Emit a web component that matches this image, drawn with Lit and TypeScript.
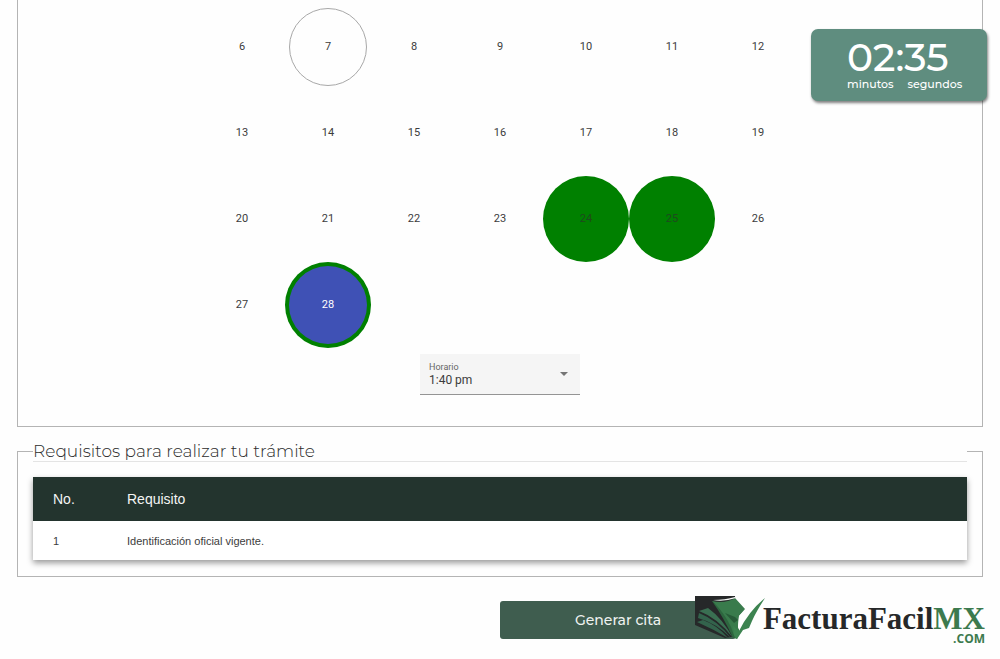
import { LitElement, html, css } from "lit";
import { customElement, state } from "lit/decorators.js";
import { classMap } from "lit/directives/class-map.js";

@customElement("brand-logo")
class BrandLogo extends LitElement {
  static styles = css`
    :host {
      display: flex;
      align-items: flex-start;
    }
    .mark {
      display: block;
      width: 72px;
      height: 46px;
      flex: none;
      margin-right: -4px;
    }
    .words {
      display: flex;
      flex-direction: column;
      align-items: flex-end;
      padding-top: 8px;
    }
    .name {
      font: bold 31px/30px "Liberation Serif", serif;
      color: #262829;
      white-space: nowrap;
    }
    .mx {
      color: #3c7a4e;
    }
    .com {
      font: bold 12px/10px "Open Sans", sans-serif;
      color: #3c7a4e;
    }
  `;
  render() {
    return html`
      <svg class="mark" viewBox="0 0 72 46" aria-hidden="true">
        <path fill="#262829" d="M0 0H40L42 40L30 42L0 29Z" />
        <path fill="#33634c" d="M2 26L8 24Q22 29 33 42Q18 33 2 26Z" />
        <path fill="#3a6f52" d="M4 15L13 12Q27 22 38 42Q23 22 4 15Z" />
        <path fill="#33634c" d="M4 17Q22 24 36 42Q21 27 3 22Z" />
        <path fill="#397b4c" d="M17 5Q30 8 40 2L50 13L44 20L43 31L45 36L42 43L39 42Q32 20 17 5Z" />
        <path fill="#2d663f" d="M17 5Q29 16 36 31L40 42H38Q29 22 17 5Z" />
        <path fill="#f7faf8" d="M18 4Q30 4 40 1L41 2Q29 6 18 4Z" />
        <path fill="#275b38" d="M30 17L40 21L43 24L39 27Z" />
        <path fill="#fefefe" d="M44 20L51 13L52 26L45 35L43 31Z" />
        <path fill="#3c8350" d="M38 30L44 35Q54 15 70 2Q61 16 57 25L54 32L48 34L42 43L39 39Z" />
      </svg>
      <div class="words">
        <div class="name">FacturaFacil<span class="mx">MX</span></div>
        <div class="com">.COM</div>
      </div>
    `;
  }
}

@customElement("app-root")
class AppRoot extends LitElement {
  static styles = css`
    :host {
      display: block;
      position: relative;
      box-sizing: border-box;
      min-height: 100vh;
      overflow: hidden;
      padding: 0 17px;
      background: #fefefe;
      color: #3c3c3c;
      font-family: "Liberation Sans", Arial, sans-serif;
    }
    * {
      box-sizing: border-box;
    }
    .panel {
      margin: 0;
      min-width: 0;
      border: 1px solid #b4b4b4;
      padding: 0 15px 16px;
    }
    .schedule {
      border-top: 0;
      padding: 4px 15px 31px;
      display: flex;
      flex-direction: column;
      align-items: center;
      gap: 6px;
    }
    .days {
      display: grid;
      grid-template-columns: repeat(7, 86px);
      grid-auto-rows: 86px;
    }
    .day {
      display: grid;
      place-items: center;
      border: 0;
      padding: 4px;
      border-radius: 50%;
      background: none;
      color: #3c3c3c;
      font: 11px/16px Roboto, sans-serif;
    }
    .face {
      display: grid;
      place-items: center;
      width: 100%;
      height: 100%;
      border-radius: 50%;
    }
    .today .face {
      border: 1px solid #a8a8a8;
    }
    .open {
      background: #008000;
      color: #1e4a1e;
    }
    .chosen {
      color: #fff;
    }
    .chosen .face {
      background: #3f51b5;
    }
    .field {
      display: grid;
      width: 160px;
      height: 41px;
      background: #f5f5f5;
      border-bottom: 1px solid #949494;
    }
    .field > * {
      grid-area: 1 / 1;
    }
    .field label {
      padding: 8px 9px 0;
      font: 9px/10px Roboto, sans-serif;
      color: #666;
    }
    .field select {
      appearance: none;
      border: 0;
      margin: 0;
      padding: 12px 9px 0;
      background: none;
      color: #3c3c3c;
      font: 12px/16px Roboto, sans-serif;
    }
    .caret {
      place-self: center end;
      width: 8px;
      height: 4px;
      margin-right: 12px;
      background: #757575;
      clip-path: polygon(0 0, 100% 0, 50% 100%);
      pointer-events: none;
    }
    .needs {
      margin-top: 14px;
    }
    .needs legend {
      width: 100%;
      padding: 0;
      margin-bottom: 15px;
      border-bottom: 1px solid #e4e4e4;
      font: 300 17px/20px Montserrat, Inter, sans-serif;
      color: #2c2c2c;
    }
    .list {
      width: 100%;
      border-collapse: collapse;
      background: #fff;
      box-shadow: 0 3px 6px rgba(0, 0, 0, 0.4);
      text-align: left;
    }
    .list th {
      height: 44px;
      padding: 0;
      background: #23342e;
      color: #f4f4f4;
      font: 14px/20px "Liberation Sans", Arial, sans-serif;
    }
    .list td {
      height: 39px;
      padding: 0;
      font-size: 11px;
      line-height: 16px;
    }
    .list .num {
      width: 94px;
      padding-left: 20px;
    }
    .actions {
      display: grid;
      grid-template-columns: 1fr 1fr;
      margin-top: 24px;
    }
    .submit {
      grid-column: 2;
      justify-self: start;
      width: 236px;
      height: 38px;
      border: 0;
      border-radius: 3px;
      background: #3f5d4f;
      color: #eef2f0;
      font: 500 14px/20px Montserrat, Inter, sans-serif;
    }
    .timer {
      position: absolute;
      top: 29px;
      right: 13px;
      width: 176px;
      height: 72px;
      display: flex;
      flex-direction: column;
      align-items: flex-start;
      padding: 8px 0 0 36px;
      border-radius: 7px;
      background: #5f8d7f;
      box-shadow: 1px 2px 3px rgba(0, 0, 0, 0.5);
      color: #fff;
      font-family: Montserrat, Inter, sans-serif;
    }
    .clock {
      font-size: 39px;
      line-height: 40px;
      font-weight: 500;
    }
    .units {
      display: flex;
      gap: 14px;
      font-size: 11px;
      line-height: 14px;
      font-weight: 500;
    }
    .brand {
      position: absolute;
      right: 15px;
      bottom: 15px;
    }
  `;

  @state() private chosen = 28;
  private days = Array.from({ length: 23 }, (_, i) => i + 6);
  private open = [24, 25, 28];

  render() {
    return html`
      <fieldset class="panel schedule">
        <div class="days">
          ${this.days.map(
            (d) => html`<button
              type="button"
              class=${classMap({
                day: true,
                today: d === 7,
                open: this.open.includes(d),
                chosen: d === this.chosen,
              })}
              aria-pressed=${d === this.chosen ? "true" : "false"}
              @click=${() => this.open.includes(d) && (this.chosen = d)}
            ><span class="face">${d}</span></button>`
          )}
        </div>
        <div class="field">
          <label for="slot">Horario</label>
          <select id="slot"><option>1:40 pm</option></select>
          <span class="caret"></span>
        </div>
      </fieldset>

      <fieldset class="panel needs">
        <legend>Requisitos para realizar tu trámite</legend>
        <table class="list">
          <thead>
            <tr><th class="num" scope="col">No.</th><th scope="col">Requisito</th></tr>
          </thead>
          <tbody>
            <tr><td class="num">1</td><td>Identificación oficial vigente.</td></tr>
          </tbody>
        </table>
      </fieldset>

      <div class="actions">
        <button type="button" class="submit">Generar cita</button>
      </div>

      <div class="timer" role="timer">
        <div class="clock">02:35</div>
        <div class="units"><span>minutos</span><span>segundos</span></div>
      </div>
      <brand-logo class="brand"></brand-logo>
    `;
  }
}
